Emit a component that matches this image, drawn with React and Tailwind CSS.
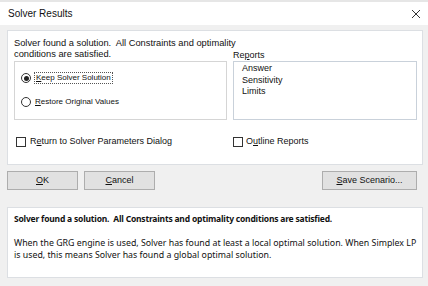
import React from 'react';

const font = { fontFamily: '"Noto Sans", "Liberation Sans", sans-serif' };

function Radio({ checked }) {
  return (
    <span className="w-[10px] h-[10px] rounded-full border border-[#333] bg-white flex items-center justify-center shrink-0">
      {checked && <span className="w-[5px] h-[5px] rounded-full bg-[#222]" />}
    </span>
  );
}

function Check() {
  return <span className="w-[10px] h-[10px] border border-[#333] bg-white shrink-0" />;
}

function Btn({ children, className = '' }) {
  return (
    <div className={`h-[19px] flex items-center justify-center bg-[#e1e1e1] border border-[#adadad] text-[9px] text-[#111] ${className}`}>
      {children}
    </div>
  );
}

export default function App() {
  return (
    <div className="w-[428px] h-[286px] bg-[#f0f0f0] flex flex-col overflow-hidden font-['Liberation_Sans',sans-serif]">
      <div className="h-[25px] bg-white border-t-[2px] border-[#e6e6e6] flex items-center justify-between pl-[8px] pr-[6px] shrink-0">
        <span className="text-[10px] text-[#111]">Solver Results</span>
        <svg width="10" height="10" viewBox="0 0 10 10" className="mr-[1px]">
          <path d="M1 1L9 9M9 1L1 9" stroke="#333" strokeWidth="1" />
        </svg>
      </div>

      <div className="pl-[7px] pr-[5px] flex flex-col">
        <div className="mt-[5px] h-[135px] bg-white border border-[#dcdfe3] pl-[6px] pr-[5px] pt-[7px] text-[9px] text-[#111]">
          <div className="flex gap-[6px] items-end">
            <div className="w-[213px] flex flex-col">
              <div className="flex flex-col items-start leading-[10.5px] text-[9.3px]">
                <span className="whitespace-nowrap">Solver found a solution.&nbsp; All Constraints and optimality</span>
                <span className="whitespace-nowrap">conditions are satisfied.</span>
              </div>
              <div className="mt-[2px] h-[59px] border border-[#d5d5d5] flex flex-col pl-[6px] pt-[10px] gap-[12px] text-[8px]">
                <div className="flex items-center gap-[3px]">
                  <Radio checked />
                  <span className="border border-dotted border-[#555] px-[1px] leading-[10px]"><u>K</u>eep Solver Solution</span>
                </div>
                <div className="flex items-center gap-[4px]">
                  <Radio />
                  <span><u>R</u>estore Original Values</span>
                </div>
              </div>
            </div>
            <div className="flex-1 flex flex-col">
              <div className="leading-[12px]">Re<u>p</u>orts</div>
              <div className="h-[59px] border border-[#c9d1da] pl-[8px] pt-[1px] leading-[11.5px]">
                <div>Answer</div>
                <div>Sensitivity</div>
                <div>Limits</div>
              </div>
            </div>
          </div>
          <div className="flex mt-[15px]">
            <div className="w-[219px] flex items-center gap-[4px] pl-[2px]">
              <Check />
              <span>R<u>e</u>turn to Solver Parameters Dialog</span>
            </div>
            <div className="flex items-center gap-[3px]">
              <Check />
              <span>O<u>u</u>tline Reports</span>
            </div>
          </div>
        </div>

        <div className="mt-[6px] flex items-center">
          <Btn className="w-[71px] border-[#222]"><u>O</u>K</Btn>
          <Btn className="w-[71px] ml-[6px]"><u>C</u>ancel</Btn>
          <Btn className="w-[95px] ml-auto mr-[6px]"><u>S</u>ave Scenario...</Btn>
        </div>

        <div className="mt-[17px] h-[71px] bg-white border border-[#dcdfe3] pl-[6px] pt-[5px] text-[8.8px] text-[#111]" style={font}>
          <div className="font-bold text-[8.5px] tracking-[-0.2px]">Solver found a solution.&nbsp; All Constraints and optimality conditions are satisfied.</div>
          <div className="mt-[11px] leading-[12px]">
            When the GRG engine is used, Solver has found at least a local optimal solution. When Simplex LP is used, this means Solver has found a global optimal solution.
          </div>
        </div>
      </div>
    </div>
  );
}
